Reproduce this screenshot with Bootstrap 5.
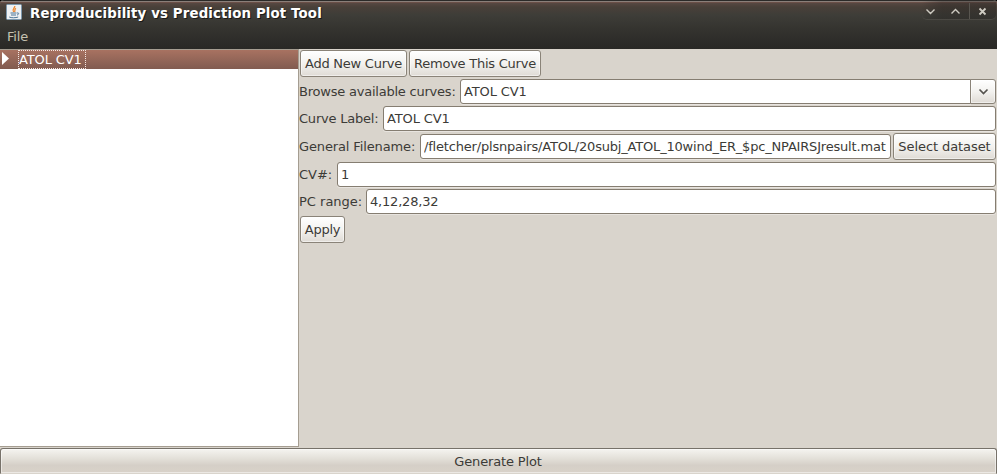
<!DOCTYPE html>
<html lang="en">
<head>
<meta charset="utf-8">
<title>Reproducibility vs Prediction Plot Tool</title>
<link href="https://cdn.jsdelivr.net/npm/bootstrap@5.3.0/dist/css/bootstrap.min.css" rel="stylesheet">
<style>
body{font:13px/17px "DejaVu Sans",sans-serif;color:#3c3b37;background:#000;height:474px}
.window{height:474px;background:#d9d4cc;border-radius:4px 4px 0 0}
.chrome{height:49px;background:linear-gradient(#5d4c46 0,#494039 6px,#3e3d38 14px,#33322e 30px,#292825 100%);border-top:1px solid #2b2a28;box-shadow:inset 0 1px #8a7f79,inset 0 2px #6a4f47}
.titlebar{height:24px;padding-left:6px}
.appicon{margin-top:3px}
.title{font-weight:700;font-size:13.33px;letter-spacing:.135px;color:#fff;margin-left:8px;padding-top:4px;text-shadow:1px 1px #1b1a18}
.controls{width:74px;height:19px;margin-right:1px;border-bottom:1px solid #4b4944;border-radius:0 0 5px 5px;background:linear-gradient(90deg,#22201e00,#22201e55 20px,#22201e55)}
.filemenu{height:24px;padding:3px 7px;color:#c5c1b0;letter-spacing:-.2px}
.tree{width:299px;height:398px;background:#fff;border-right:1px solid #a59d91;border-bottom:1px solid #a59d91;border-top:1px solid #a59d91}
.treerow{height:19px;background:linear-gradient(#a87261,#815b50);color:#fff;padding-left:2px}
.treelabel{height:19px;border:1px dotted #f5e7e2;width:68px;margin-left:8px;line-height:17px;white-space:nowrap;letter-spacing:-.12px}
.pane{padding:1px 1px 0 0;row-gap:2px}
.buttons{column-gap:2px;padding-left:1px}
.btn.tool{font-size:13px;line-height:17px;padding:4px 0;height:27px;border:1px solid #8a8378;border-radius:3px;color:#3c3b37;background:linear-gradient(#fff,#f3f2ef 50%,#dfdbd5);box-shadow:inset 0 0 0 1px #ffffff80;white-space:nowrap;letter-spacing:-.24px}
.form-control.entry{font-size:13px;line-height:17px;height:25px;min-height:0;padding:3px 3px;border:1px solid #857d71;border-radius:3px;color:#3c3b37;box-shadow:0 1px #e8e4df;width:auto;min-width:0;letter-spacing:-.12px}
.form-control.pathentry{letter-spacing:-.187px}
.form-control.rangeentry{letter-spacing:-.2px}
.line{height:25px}
.caption{white-space:nowrap;flex:none}
.w-add{width:107px}.w-remove{width:132px}.w-apply{width:45px}
.btn.tool.w-select{width:103px;margin-left:2px;letter-spacing:-.08px}
.c-browse{width:161px;letter-spacing:-.22px}.c-label{width:84px;letter-spacing:-.22px}.c-file{width:121px;letter-spacing:-.13px}.c-cv{width:38px}.c-pc{width:67px}
.form-control.browse{border-radius:3px 0 0 3px}
.btn.tool.drop{width:26px;height:25px;margin-left:-1px;border-radius:0 3px 3px 0;padding:0}
.btn.tool.generate{height:26px;margin-top:1px;padding-right:1px;letter-spacing:-.14px;border-color:#77726a #77726a #d9d4cc;border-radius:3px 3px 0 0;background:linear-gradient(#f5f4f0,#e4e1da 38%,#d5cfc7 68%,#d9d2c9)}
</style>
<script src="https://cdn.jsdelivr.net/npm/bootstrap@5.3.0/dist/js/bootstrap.bundle.min.js"></script>
</head>
<body class="overflow-hidden">
<div class="window d-flex flex-column overflow-hidden">
  <header class="chrome">
    <div class="titlebar d-flex align-items-start">
      <svg class="appicon" width="16" height="16" viewBox="0 0 16 16"><rect x=".5" y=".5" width="15" height="15" rx="1" fill="#eef1f3" stroke="#7d98ad"/><path d="M8.800 2C9 4 5.500 5 7.600 8M10 4.300C7.800 5.400 9.600 6.400 8.500 8" fill="none" stroke="#ed8a35" stroke-width="1.300"/><path d="M4.500 9h6M5 11h5M3.200 13c2 1 6.500 1 9 0M11 9c2.500-.5 2 1.600 0 2" fill="none" stroke="#4d7595" stroke-width="1"/></svg>
      <span class="title">Reproducibility vs Prediction Plot Tool</span>
      <div class="controls ms-auto">
        <svg class="d-block" width="74" height="19" viewBox="0 0 74 19" fill="none" stroke="#cfccc3" stroke-width="1.400"><path d="M4.500 8.500l4 4 4-4M29.500 12.500l4-4 4 4"/><path d="M57.500 7.500l6 6M63.500 7.500l-6 6" stroke-width="1.800"/><path d="M47.500 2v16" stroke="#595650" stroke-width="1"/></svg>
      </div>
    </div>
    <nav class="filemenu">File</nav>
  </header>
  <main class="d-flex">
    <aside class="tree flex-shrink-0">
      <div class="treerow d-flex">
        <svg width="8" height="19" viewBox="0 0 8 19"><path d="M0 2l7 6.500L0 15z" fill="#fff"/></svg>
        <span class="treelabel">ATOL CV1</span>
      </div>
    </aside>
    <section class="pane flex-grow-1 d-flex flex-column">
      <div class="buttons d-flex">
        <button class="btn tool w-add">Add New Curve</button>
        <button class="btn tool w-remove">Remove This Curve</button>
      </div>
      <div class="line d-flex align-items-center">
        <label class="caption c-browse">Browse available curves:</label>
        <input class="form-control entry browse flex-grow-1" value="ATOL CV1">
        <button class="btn tool drop d-flex align-items-center justify-content-center" aria-label="Open list"><svg width="12" height="8" viewBox="0 0 12 8"><path d="M2.500 1.500l4 4 4-4" fill="none" stroke="#55534e" stroke-width="1.700"/></svg></button>
      </div>
      <div class="line d-flex align-items-center">
        <label class="caption c-label">Curve Label:</label>
        <input class="form-control entry flex-grow-1" value="ATOL CV1">
      </div>
      <div class="d-flex align-items-center">
        <label class="caption c-file">General Filename:</label>
        <input class="form-control entry pathentry flex-grow-1" value="/fletcher/plsnpairs/ATOL/20subj_ATOL_10wind_ER_$pc_NPAIRSJresult.mat">
        <button class="btn tool w-select flex-shrink-0">Select dataset</button>
      </div>
      <div class="line d-flex align-items-center">
        <label class="caption c-cv">CV#:</label>
        <input class="form-control entry flex-grow-1" value="1">
      </div>
      <div class="line d-flex align-items-center">
        <label class="caption c-pc">PC range:</label>
        <input class="form-control entry rangeentry flex-grow-1" value="4,12,28,32">
      </div>
      <div class="buttons d-flex"><button class="btn tool w-apply">Apply</button></div>
    </section>
  </main>
  <button class="btn tool generate w-100">Generate Plot</button>
</div>
</body>
</html>
